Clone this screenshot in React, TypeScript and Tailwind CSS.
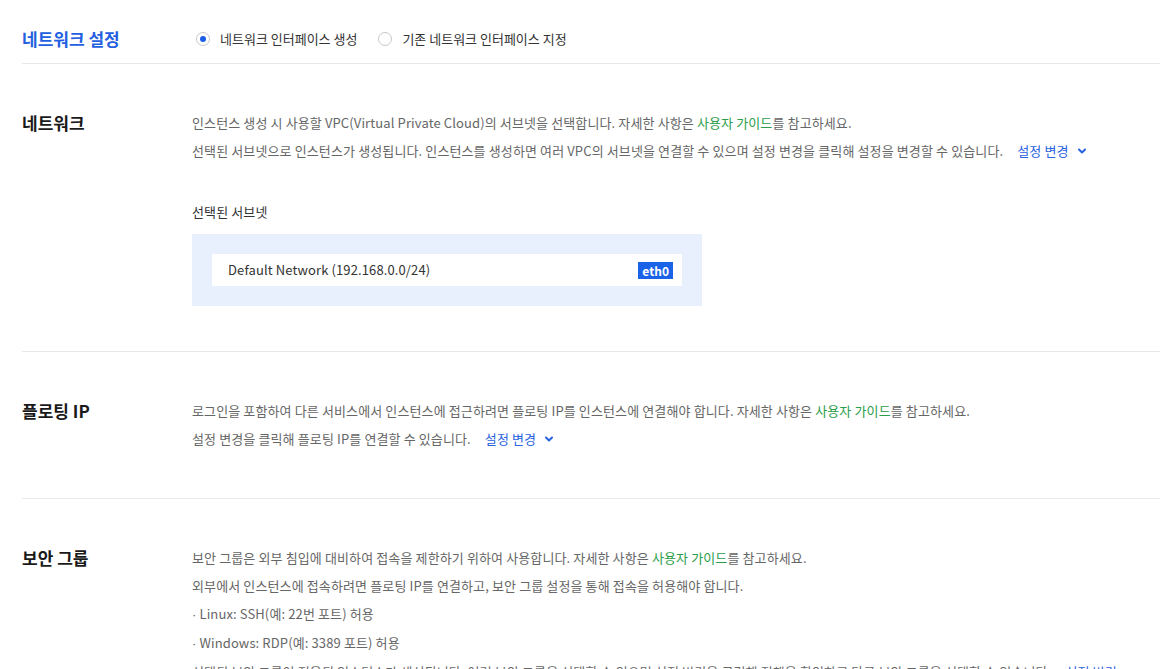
import { ChevronDown } from 'lucide-react';

const font = { fontFamily: '"Noto Sans CJK KR", "Noto Sans", sans-serif' };

function Radio({ checked, label }: { checked?: boolean; label: string }) {
  return (
    <label className="flex items-center gap-[10px] cursor-pointer">
      <span className="w-[14px] h-[14px] rounded-full border border-[#c8c8c8] bg-white flex items-center justify-center">
        {checked && <span className="w-[6px] h-[6px] rounded-full bg-[#1a5ee6]" />}
      </span>
      <span className="text-[13px] text-[#333]">{label}</span>
    </label>
  );
}

function Guide() {
  return <span className="text-[#2a9d4a]">사용자 가이드</span>;
}

function ChangeLink() {
  return (
    <span className="inline-flex items-center gap-[7px] ml-[14px] text-[#2862e0]">
      설정 변경
      <ChevronDown size={12} strokeWidth={4} />
    </span>
  );
}

function Dot() {
  return <span className="font-['Liberation_Sans'] mr-[3px]">·</span>;
}

function Section({ title, children }: { title: string; children: React.ReactNode }) {
  return (
    <section className="flex border-t border-[#e8e8e8] pt-[45px] pb-[45px]">
      <h2 className="w-[170px] shrink-0 text-[17px] font-bold text-[#1a1a1a] leading-[28px]">{title}</h2>
      <div className="flex-1 text-[13px] text-[#666] leading-[28px] tracking-[0.12px]">{children}</div>
    </section>
  );
}

export default function App() {
  return (
    <div className="bg-white pl-[22px] min-h-screen" style={font}>
      <div className="flex items-center pt-[25px] pb-[10px]">
        <h1 className="w-[174px] shrink-0 text-[17px] font-bold text-[#2260e0] leading-[28px]">네트워크 설정</h1>
        <div className="flex items-center gap-[21px]">
          <Radio checked label="네트워크 인터페이스 생성" />
          <Radio label="기존 네트워크 인터페이스 지정" />
        </div>
      </div>

      <Section title="네트워크">
        <p>
          인스턴스 생성 시 사용할 VPC(Virtual Private Cloud)의 서브넷을 선택합니다. 자세한 사항은 <Guide />를 참고하세요.
        </p>
        <p>
          선택된 서브넷으로 인스턴스가 생성됩니다. 인스턴스를 생성하면 여러 VPC의 서브넷을 연결할 수 있으며 설정 변경을 클릭해 설정을 변경할 수 있습니다.
          <ChangeLink />
        </p>
        <div className="mt-[37px] text-[#333] leading-[20px]">선택된 서브넷</div>
        <div className="mt-[12px] w-[510px] bg-[#e8f0fd] p-[20px]">
          <div className="bg-white h-[32px] flex items-center justify-between pl-[16px] pr-[9px]">
            <span className="text-[13px] text-[#333]">Default Network (192.168.0.0/24)</span>
            <span className="bg-[#1a62e8] text-white text-[12px] font-bold leading-[17px] px-[4px] tracking-normal">eth0</span>
          </div>
        </div>
      </Section>

      <Section title="플로팅 IP">
        <p>
          로그인을 포함하여 다른 서비스에서 인스턴스에 접근하려면 플로팅 IP를 인스턴스에 연결해야 합니다. 자세한 사항은 <Guide />를 참고하세요.
        </p>
        <p>
          설정 변경을 클릭해 플로팅 IP를 연결할 수 있습니다.
          <ChangeLink />
        </p>
      </Section>

      <Section title="보안 그룹">
        <p>
          보안 그룹은 외부 침입에 대비하여 접속을 제한하기 위하여 사용합니다. 자세한 사항은 <Guide />를 참고하세요.
        </p>
        <p>외부에서 인스턴스에 접속하려면 플로팅 IP를 연결하고, 보안 그룹 설정을 통해 접속을 허용해야 합니다.</p>
        <p>
          <Dot />Linux: SSH(예: 22번 포트) 허용
        </p>
        <p>
          <Dot />Windows: RDP(예: 3389 포트) 허용
        </p>
        <p className="whitespace-nowrap">
          선택된 보안 그룹이 적용된 인스턴스가 생성됩니다. 여러 보안 그룹을 선택할 수 있으며 설정 변경을 클릭해 정책을 확인하고 다른 보안 그룹을 선택할 수 있습니다.
          <ChangeLink />
        </p>
      </Section>
    </div>
  );
}
